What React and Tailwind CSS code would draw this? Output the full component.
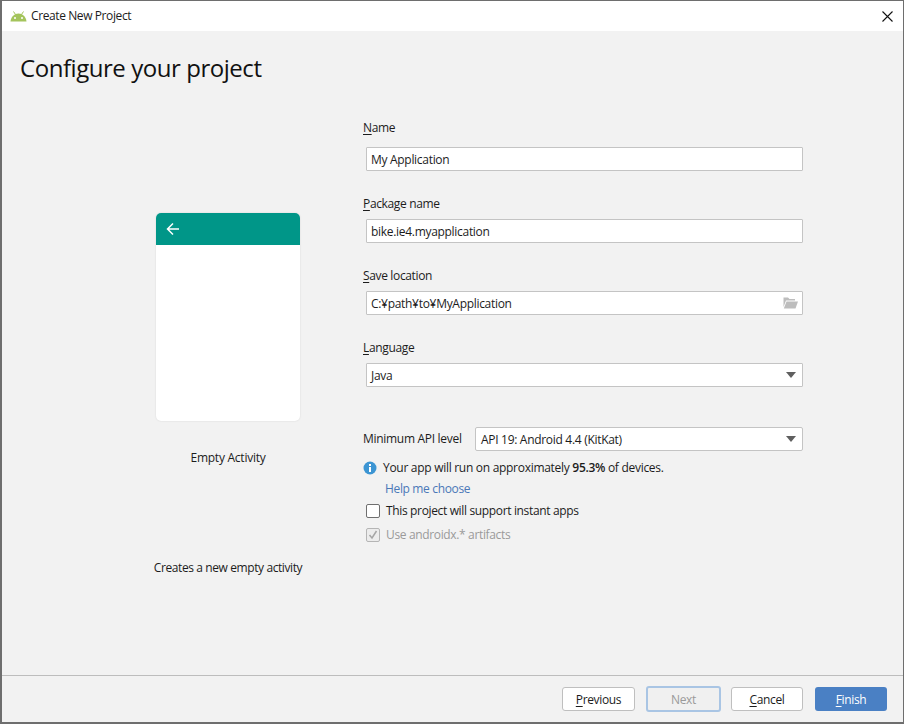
import React from "react";

const font = { fontFamily: '"Open Sans", "Noto Sans", sans-serif' };

function Android() {
  return (
    <svg width="17" height="11" viewBox="0 0 17 11" className="block">
      <path d="M0.5 10.5 C1 5.5 4.5 2.5 8.5 2.5 C12.5 2.5 16 5.5 16.5 10.5 Z" fill="#a4c45c" />
      <path d="M3.5 0.5 L5.5 3.5 M13.5 0.5 L11.5 3.5" stroke="#a4c45c" strokeWidth="1" />
      <circle cx="5" cy="7" r="1" fill="#fff" />
      <circle cx="12" cy="7" r="1" fill="#fff" />
    </svg>
  );
}

function Label({ u, rest, className = "" }) {
  return (
    <div className={`text-[12px] leading-[16px] text-[#1c1c1c] tracking-[-0.35px] ${className}`}>
      <span className="underline underline-offset-2">{u}</span>
      {rest}
    </div>
  );
}

function Field({ value, right, className = "" }) {
  return (
    <div className={`h-6 bg-white border border-[#c4c4c4] rounded-[1px] flex items-center pr-[4px] text-[12px] text-[#1c1c1c] tracking-[-0.3px] ${className}`}>
      <span className="flex-1 whitespace-nowrap pt-[2px]">{value}</span>
      {right}
    </div>
  );
}

function Caret() {
  return (
    <svg width="10" height="6" viewBox="0 0 10 6" className="mr-[2px] block">
      <path d="M0 0 H10 L5 6 Z" fill="#5f5f5f" />
    </svg>
  );
}

function Folder() {
  return (
    <svg width="15" height="12" viewBox="0 0 15 12" className="block">
      <path d="M0.5 0.5 H5 L6.5 2 H12 V3.5 H3 L0.5 10 Z" fill="#bdbdbd" />
      <path d="M3.5 4.5 H15 L12.5 11.5 H0.8 Z" fill="#bdbdbd" />
    </svg>
  );
}

function Btn({ children, className = "" }) {
  return (
    <div className={`h-6 flex items-center justify-center rounded-[3px] text-[12px] tracking-[-0.35px] pt-[2px] ${className}`}>
      {children}
    </div>
  );
}

export default function App() {
  return (
    <div style={font} className="w-[904px] h-[724px] bg-[#6e6e6e] pt-[1px] pb-[2px] pl-[2px] pr-[1px] overflow-hidden">
      <div className="h-full flex flex-col bg-[#f2f2f2]">
        <div className="h-[30px] bg-white flex items-center pl-[8px] pr-[10px] shrink-0">
          <Android />
          <span className="ml-[4px] text-[12px] text-[#1c1c1c] tracking-[-0.4px] flex-1">Create New Project</span>
          <svg width="11" height="11" viewBox="0 0 11 11" className="block">
            <path d="M0.5 0.5 L10.5 10.5 M10.5 0.5 L0.5 10.5" stroke="#111" strokeWidth="1.1" />
          </svg>
        </div>

        <div className="h-[76px] shrink-0 pl-[18px] pt-[19px] text-[24px] leading-[36px] text-[#111] tracking-[-0.45px]">
          Configure your project
        </div>

        <div className="flex-1 flex min-h-0">
          <div className="w-[361px] shrink-0 flex flex-col items-center pl-[91px]">
            <div className="mt-[106px] w-[144px] h-[208px] shrink-0 bg-white rounded-[5px] shadow-[0_0_2px_rgba(0,0,0,0.12)] overflow-hidden">
              <div className="h-8 bg-[#009688] flex items-center pl-[10px]">
                <svg width="14" height="14" viewBox="0 0 14 14" className="block">
                  <path d="M13 7 H2 M7 1.5 L1.5 7 L7 12.5" fill="none" stroke="#fff" strokeWidth="1.5" />
                </svg>
              </div>
            </div>
            <div className="mt-[29px] text-[12px] leading-[16px] text-[#1c1c1c] tracking-[-0.25px] whitespace-nowrap">Empty Activity</div>
            <div className="mt-[94px] text-[12px] leading-[16px] text-[#1c1c1c] tracking-[-0.4px] whitespace-nowrap">Creates a new empty activity</div>
          </div>

          <div className="w-[440px] shrink-0 flex flex-col pt-[13px]">
            <Label u="N" rest="ame" />
            <Field value="My Application" className="mt-[11px] ml-[3px] pl-[4px]" />
            <Label u="P" rest="ackage name" className="mt-[25px]" />
            <Field value="bike.ie4.myapplication" className="mt-[7px] ml-[3px] pl-[4px]" />
            <Label u="S" rest="ave location" className="mt-[25px]" />
            <Field value="C:¥path¥to¥MyApplication" right={<Folder />} className="mt-[7px] ml-[3px] pl-[4px]" />
            <Label u="L" rest="anguage" className="mt-[25px]" />
            <Field value="Java" right={<Caret />} className="mt-[7px] ml-[3px] pl-[4px]" />
            <div className="mt-[40px] flex items-center">
              <span className="w-[112px] text-[12px] text-[#1c1c1c] tracking-[-0.3px] whitespace-nowrap">Minimum API level</span>
              <Field value="API 19: Android 4.4 (KitKat)" right={<Caret />} className="flex-1 rounded-[2px] pl-[5px]" />
            </div>
            <div className="mt-[9px] flex items-center text-[12px] leading-[16px] text-[#1c1c1c] tracking-[-0.29px]">
              <svg width="14" height="14" viewBox="0 0 14 14" className="block">
                <circle cx="7" cy="7" r="6.5" fill="#3c95d3" />
                <rect x="6" y="6" width="2" height="5" fill="#fff" />
                <rect x="6" y="3" width="2" height="2" fill="#fff" />
              </svg>
              <span className="ml-[6px] whitespace-nowrap">
                Your app will run on approximately <span className="font-semibold">95.3%</span> of devices.
              </span>
            </div>
            <div className="mt-[5px] ml-[22px] text-[12px] leading-[16px] text-[#4a78b8] tracking-[-0.35px]">Help me choose</div>
            <div className="mt-[6px] ml-[3px] flex items-center text-[12px] leading-[16px] text-[#1c1c1c] tracking-[-0.35px]">
              <div className="w-[14px] h-[14px] bg-white border border-[#6f6f6f] rounded-[2px]" />
              <span className="ml-[6px]">This project will support instant apps</span>
            </div>
            <div className="mt-[8px] ml-[3px] flex items-center text-[12px] leading-[16px] text-[#9a9a9a] tracking-[-0.35px]">
              <div className="w-[14px] h-[14px] bg-[#ececec] border border-[#b5b5b5] rounded-[2px] flex items-center justify-center">
                <svg width="10" height="10" viewBox="0 0 10 10" className="block">
                  <path d="M1.5 5 L4 8 L8.5 1" fill="none" stroke="#a5a5a5" strokeWidth="1.5" />
                </svg>
              </div>
              <span className="ml-[6px]">Use androidx.* artifacts</span>
            </div>
          </div>
        </div>

        <div className="h-[47px] shrink-0 border-t border-[#bdbdbd] flex items-center justify-end pr-[16px]">
          <Btn className="w-[73px] bg-white border border-[#bfbfbf] text-[#1c1c1c]">
            <span><span className="underline underline-offset-2">P</span>revious</span>
          </Btn>
          <Btn className="ml-[11px] w-[75px] h-[26px] bg-[#f0f0f0] border-2 border-[#a9c5e4] text-[#9a9a9a]">Next</Btn>
          <Btn className="ml-[10px] w-[72px] bg-white border border-[#bfbfbf] text-[#1c1c1c]">
            <span><span className="underline underline-offset-2">C</span>ancel</span>
          </Btn>
          <Btn className="ml-[12px] w-[72px] bg-[#4a80c4] text-white">
            <span><span className="underline underline-offset-2">F</span>inish</span>
          </Btn>
        </div>
      </div>
    </div>
  );
}
